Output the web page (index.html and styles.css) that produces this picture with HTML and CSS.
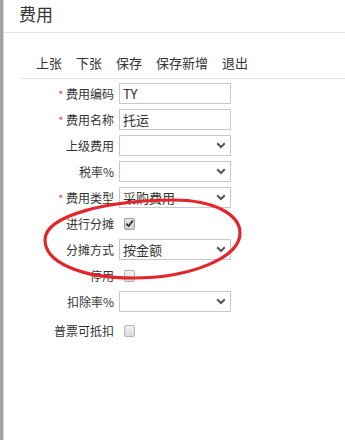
FILE: index.html
```html
<!DOCTYPE html>
<html lang="zh-CN">
<head>
<meta charset="utf-8">
<title>费用</title>
<link rel="stylesheet" href="styles.css">
</head>
<body>
<div class="page">
  <div class="backdrop"></div>
  <div class="panel">
    <div class="header"><span class="title">费用</span></div>
    <div class="toolbar">
      <span class="tool">上张</span>
      <span class="tool">下张</span>
      <span class="tool">保存</span>
      <span class="tool">保存新增</span>
      <span class="tool">退出</span>
    </div>
    <div class="form">
      <div class="row">
        <label class="label"><span class="req">*</span> 费用编码</label>
        <div class="field">TY</div>
      </div>
      <div class="row">
        <label class="label"><span class="req">*</span> 费用名称</label>
        <div class="field">托运</div>
      </div>
      <div class="row">
        <label class="label">上级费用</label>
        <div class="field select"><span class="val"></span><svg class="chev" width="10" height="7" viewBox="0 0 10 7"><path d="M1.2 1.3 L5 5 L8.8 1.3" fill="none" stroke="#555" stroke-width="2"/></svg></div>
      </div>
      <div class="row">
        <label class="label">税率%</label>
        <div class="field select"><span class="val"></span><svg class="chev" width="10" height="7" viewBox="0 0 10 7"><path d="M1.2 1.3 L5 5 L8.8 1.3" fill="none" stroke="#555" stroke-width="2"/></svg></div>
      </div>
      <div class="row">
        <label class="label"><span class="req">*</span> 费用类型</label>
        <div class="field select"><span class="val">采购费用</span><svg class="chev" width="10" height="7" viewBox="0 0 10 7"><path d="M1.2 1.3 L5 5 L8.8 1.3" fill="none" stroke="#555" stroke-width="2"/></svg></div>
      </div>
      <div class="row">
        <label class="label">进行分摊</label>
        <div class="check-wrap"><span class="check checked"><svg width="9" height="9" viewBox="0 0 9 9"><path d="M1.3 4.6 L3.6 7 L7.8 1.6" fill="none" stroke="#333" stroke-width="1.8"/></svg></span></div>
      </div>
      <div class="row">
        <label class="label">分摊方式</label>
        <div class="field select"><span class="val">按金额</span><svg class="chev" width="10" height="7" viewBox="0 0 10 7"><path d="M1.2 1.3 L5 5 L8.8 1.3" fill="none" stroke="#555" stroke-width="2"/></svg></div>
      </div>
      <div class="row">
        <label class="label">停用</label>
        <div class="check-wrap"><span class="check"></span></div>
      </div>
      <div class="row">
        <label class="label">扣除率%</label>
        <div class="field select"><span class="val"></span><svg class="chev" width="10" height="7" viewBox="0 0 10 7"><path d="M1.2 1.3 L5 5 L8.8 1.3" fill="none" stroke="#555" stroke-width="2"/></svg></div>
      </div>
      <div class="row last">
        <label class="label">普票可抵扣</label>
        <div class="check-wrap"><span class="check"></span></div>
      </div>
    </div>
  </div>
  <svg class="annotation" width="345" height="440" viewBox="0 0 345 440">
    <path d="M45 240 C45 215 110 200 173 200 C215 200 240 215 240 233 C240 258 190 278 133 278 C80 278 45 262 45 240 Z" fill="none" stroke="#e3262c" stroke-width="3.2"/>
  </svg>
</div>
</body>
</html>
```

FILE: styles.css
```css
html, body {
  margin: 0;
  padding: 0;
  background: #ffffff;
}

body {
  font-family: "Noto Sans CJK SC", "Noto Sans", "Liberation Sans", sans-serif;
  color: #333333;
}

.page {
  position: relative;
  display: flex;
  width: 345px;
  height: 440px;
  overflow: hidden;
}

.backdrop {
  width: 3px;
  flex: none;
  background: #a3a3a3;
  border-right: 1px solid #d2d2d2;
}

.panel {
  flex: 1;
  display: flex;
  flex-direction: column;
  background: #ffffff;
}

.header {
  height: 32px;
  border-bottom: 1px solid #e5e5e5;
  padding-left: 15px;
}

.title {
  font-size: 17px;
  line-height: 28px;
  color: #333333;
}

.toolbar {
  margin-left: 16px;
  padding-left: 16px;
  padding-top: 21px;
  height: 24px;
  border-bottom: 1px solid #e5e5e5;
  display: flex;
  gap: 14px;
}

.tool {
  font-size: 13px;
  line-height: 18px;
  color: #333333;
}

.form {
  padding-top: 4px;
  display: flex;
  flex-direction: column;
  gap: 5px;
}

.row {
  display: flex;
  align-items: center;
  height: 21px;
  gap: 5px;
}

.row.last {
  margin-top: 3px;
}

.label {
  width: 110px;
  text-align: right;
  font-size: 12px;
  line-height: 16px;
  color: #333333;
  white-space: nowrap;
}

.req {
  color: #d9446a;
  font-size: 11px;
}

.field {
  box-sizing: border-box;
  width: 112px;
  height: 21px;
  border: 1px solid #c9c9c9;
  padding: 0 3px;
  font-size: 13px;
  line-height: 19px;
  color: #333333;
  display: flex;
  align-items: center;
}

.select .val {
  flex: 1;
}

.chev {
  margin-right: 1px;
}

.check-wrap {
  padding-left: 5px;
  display: flex;
  align-items: center;
}

.check {
  box-sizing: border-box;
  width: 11px;
  height: 12px;
  border: 1px solid #b4b4b4;
  border-radius: 2px;
  background: linear-gradient(#f2f2f2, #dadada);
  display: flex;
  align-items: center;
  justify-content: center;
}

.check.checked {
  background: linear-gradient(#e6e6e6, #cfcfcf);
  border-color: #9c9c9c;
}

.annotation {
  position: absolute;
  left: 0;
  top: 0;
  pointer-events: none;
}
```
